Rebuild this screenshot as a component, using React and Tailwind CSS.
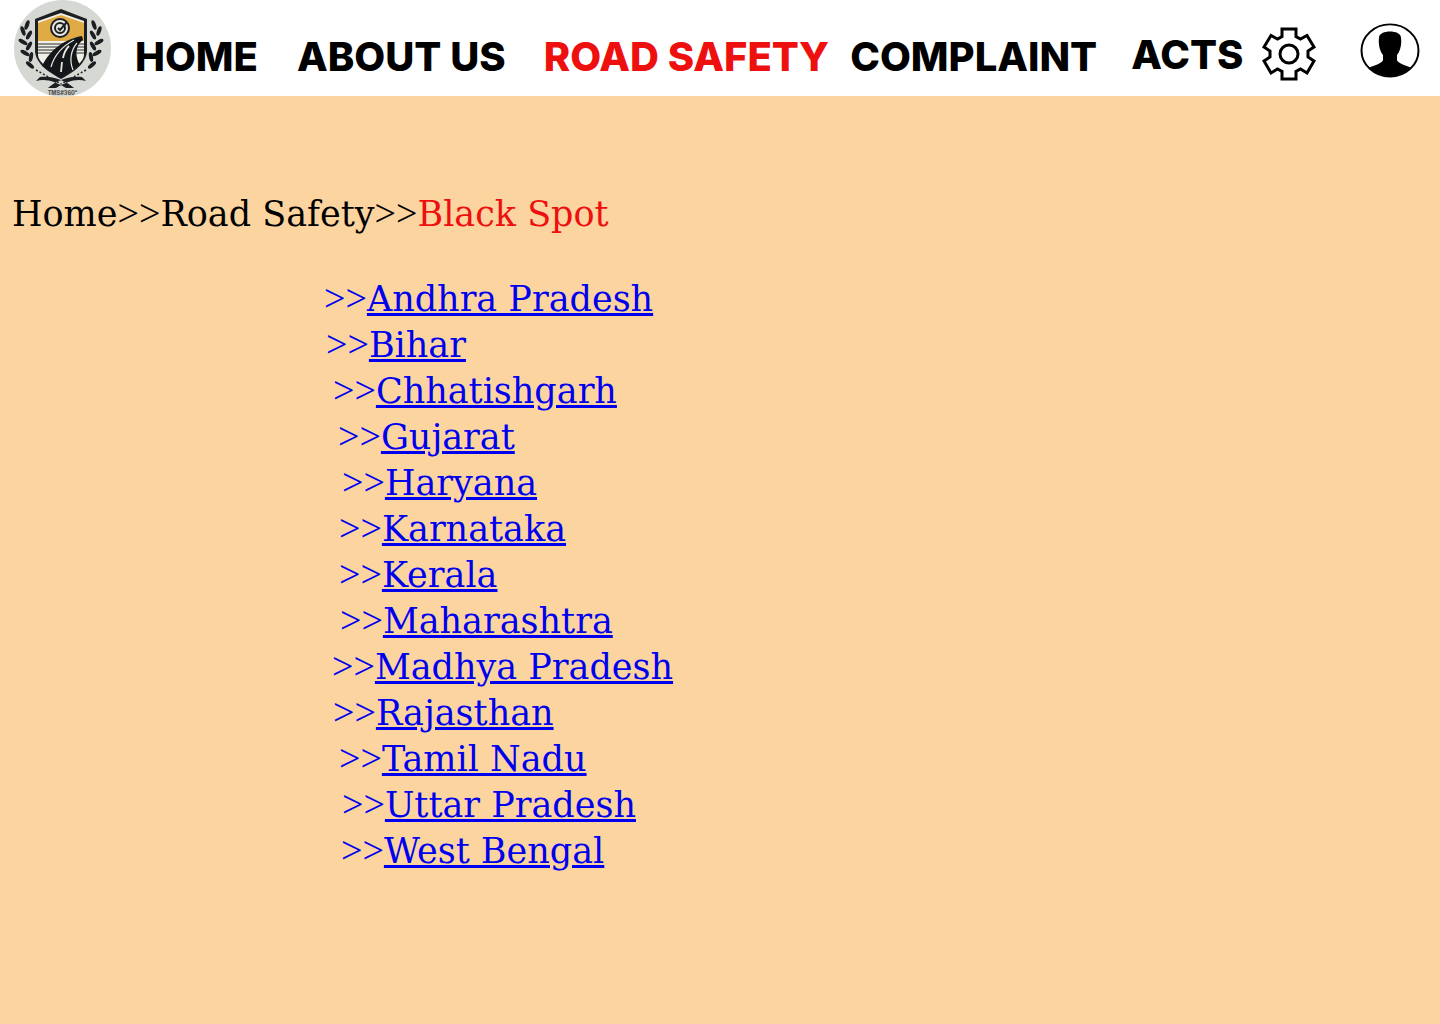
const states = [
  ["Andhra Pradesh", "ml-[324px]"],
  ["Bihar", "ml-[326px]"],
  ["Chhatishgarh", "ml-[333px]"],
  ["Gujarat", "ml-[338px]"],
  ["Haryana", "ml-[342px]"],
  ["Karnataka", "ml-[339px]"],
  ["Kerala", "ml-[339px]"],
  ["Maharashtra", "ml-[340px]"],
  ["Madhya Pradesh", "ml-[332px]"],
  ["Rajasthan", "ml-[333px]"],
  ["Tamil Nadu", "ml-[339px]"],
  ["Uttar Pradesh", "ml-[342px]"],
  ["West Bengal", "ml-[341px]"],
];

function Arrows() {
  return <span className="[font-family:'Liberation_Serif',serif] text-[38px] leading-none">&gt;&gt;</span>;
}

function Logo() {
  return (
    <svg viewBox="0 0 97 97" className="w-[97px] h-[97px] shrink-0 ml-[14px]">
      <circle cx="48.5" cy="48.5" r="48.5" fill="#d6d8d3" />
      <path d="M47 9 L73 19 V50 C73 63 60 72 47 79 C34 72 21 63 21 50 V19 Z" fill="#1c1f22" />
      <path d="M47 13 L70 21 V55 C70 62 58 70 47 76 C36 70 24 62 24 55 V21 Z" fill="#f2efe6" />
      <path d="M24 23 L47 15 L70 23 V41 H24 Z" fill="#e0aa45" />
      <path d="M24 44 H70 M24 47 H70 M24 50 H70 M24 53 H70" stroke="#2a2c2e" strokeWidth="1" />
      <circle cx="46" cy="28" r="9" fill="#e8e6de" stroke="#1c1f22" strokeWidth="2" />
      <circle cx="46" cy="28" r="5" fill="none" stroke="#1c1f22" strokeWidth="2" />
      <path d="M44 28 L46 30 L53 22" fill="none" stroke="#1c1f22" strokeWidth="2" />
      <path d="M28 66 C34 54 46 40 68 36 L69 40 C62 45 60 55 66 65 L47 78 Z" fill="#14171a" />
      <path d="M37 67 C40 56 47 47 60 40 M59 70 C55 60 57 50 63 43" fill="none" stroke="#e8e6de" strokeWidth="1.2" />
      <path d="M47 72 L48 62 M49 58 C50 53 52 49 55 46" fill="none" stroke="#e8e6de" strokeWidth="1.8" />
      <g fill="#1c1f22">
        <ellipse cx="13" cy="25" rx="2" ry="5" transform="rotate(20 13 25)" />
        <ellipse cx="9" cy="31" rx="2" ry="5" transform="rotate(-20 9 31)" />
        <ellipse cx="15" cy="35" rx="2" ry="5" transform="rotate(30 15 35)" />
        <ellipse cx="9" cy="42" rx="2" ry="5" transform="rotate(-60 9 42)" />
        <ellipse cx="15" cy="46" rx="2" ry="5" transform="rotate(30 15 46)" />
        <ellipse cx="11" cy="53" rx="2" ry="5" transform="rotate(-60 11 53)" />
        <ellipse cx="17" cy="57" rx="2" ry="5" transform="rotate(10 17 57)" />
        <ellipse cx="16" cy="65" rx="2" ry="5" transform="rotate(-50 16 65)" />
        <ellipse cx="80" cy="25" rx="2" ry="5" transform="rotate(-20 80 25)" />
        <ellipse cx="85" cy="31" rx="2" ry="5" transform="rotate(20 85 31)" />
        <ellipse cx="79" cy="35" rx="2" ry="5" transform="rotate(-30 79 35)" />
        <ellipse cx="85" cy="42" rx="2" ry="5" transform="rotate(60 85 42)" />
        <ellipse cx="79" cy="46" rx="2" ry="5" transform="rotate(-30 79 46)" />
        <ellipse cx="83" cy="53" rx="2" ry="5" transform="rotate(60 83 53)" />
        <ellipse cx="77" cy="57" rx="2" ry="5" transform="rotate(-10 77 57)" />
        <ellipse cx="78" cy="65" rx="2" ry="5" transform="rotate(50 78 65)" />
      </g>
      <path d="M22 70 L47 84" fill="none" stroke="#1c1f22" strokeWidth="1.5" strokeDasharray="2 2" />
      <path d="M72 70 L47 84" fill="none" stroke="#1c1f22" strokeWidth="1.5" strokeDasharray="2 2" />
      <path d="M22 81 C32 78 42 82 52 88 L60 88 C50 80 40 76 26 77 Z M72 81 C62 78 52 82 42 88 L34 88 C44 80 54 76 68 77 Z" fill="#1c1f22" />
      <text x="48.5" y="94.5" textAnchor="middle" fontSize="5.5" fill="#555" fontFamily="Inter, sans-serif">TMS#360°</text>
    </svg>
  );
}

function Gear() {
  return (
    <svg viewBox="0 0 54 54" className="w-[54px] h-[54px] ml-[19px] mt-[-7px] shrink-0" fill="none" stroke="#000" strokeWidth="3" strokeLinejoin="miter">
      <path d="M20 2 H34 V9.5 L38.5 12 L45 8.5 L52 20 L46 24 V30 L52 34 L45 46 L38.5 42 L34 44.5 V52 H20 V44.5 L15.5 42 L9 46 L2 34 L8 30 V24 L2 20 L9 8.5 L15.5 12 L20 9.5 Z" />
      <circle cx="27" cy="27" r="9" />
    </svg>
  );
}

function User() {
  return (
    <svg viewBox="0 0 60 60" preserveAspectRatio="none" className="w-[60px] h-[55px] ml-[44px] mt-[-11px] shrink-0">
      <defs>
        <clipPath id="uc"><circle cx="30" cy="30" r="28" /></clipPath>
      </defs>
      <circle cx="30" cy="30" r="28.5" fill="#fff" stroke="#000" strokeWidth="2" />
      <path clipPath="url(#uc)" d="M19 16 C19 7 41 7 41 16 C42 24 40 31 37 35 V41 C40 46 50 47 56 52 L56 60 H4 L4 52 C10 47 20 46 23 41 V35 C20 31 18 24 19 16 Z" fill="#000" />
    </svg>
  );
}

export default function App() {
  return (
    <div className="min-h-[1024px] bg-[#fbd49f] [font-family:'DejaVu_Serif',serif]">
      <header className="h-[96px] bg-white flex items-start overflow-visible [font-family:Inter,sans-serif] font-extrabold text-[40px] leading-[46px] text-black">
        <Logo />
        <nav className="flex items-start pt-[34px]">
          <a className="ml-[24px]">HOME</a>
          <a className="ml-[39px]">ABOUT US</a>
          <a className="ml-[38px] text-[#ee0f0f]">ROAD SAFETY</a>
          <a className="ml-[21px]">COMPLAINT</a>
          <a className="ml-[34px] mt-[-2px]">ACTS</a>
          <Gear />
          <User />
        </nav>
      </header>
      <main className="pt-[95px] text-[35px] leading-[46px]">
        <p className="ml-[12px] text-black">
          Home<Arrows />Road Safety<Arrows /><span className="text-[#ee0f0f]">Black Spot</span>
        </p>
        <ul className="mt-[39px] text-[#0000ee]">
          {states.map(([name, cls]) => (
            <li key={name} className={cls}>
              <Arrows /><a className="underline">{name}</a>
            </li>
          ))}
        </ul>
      </main>
    </div>
  );
}
